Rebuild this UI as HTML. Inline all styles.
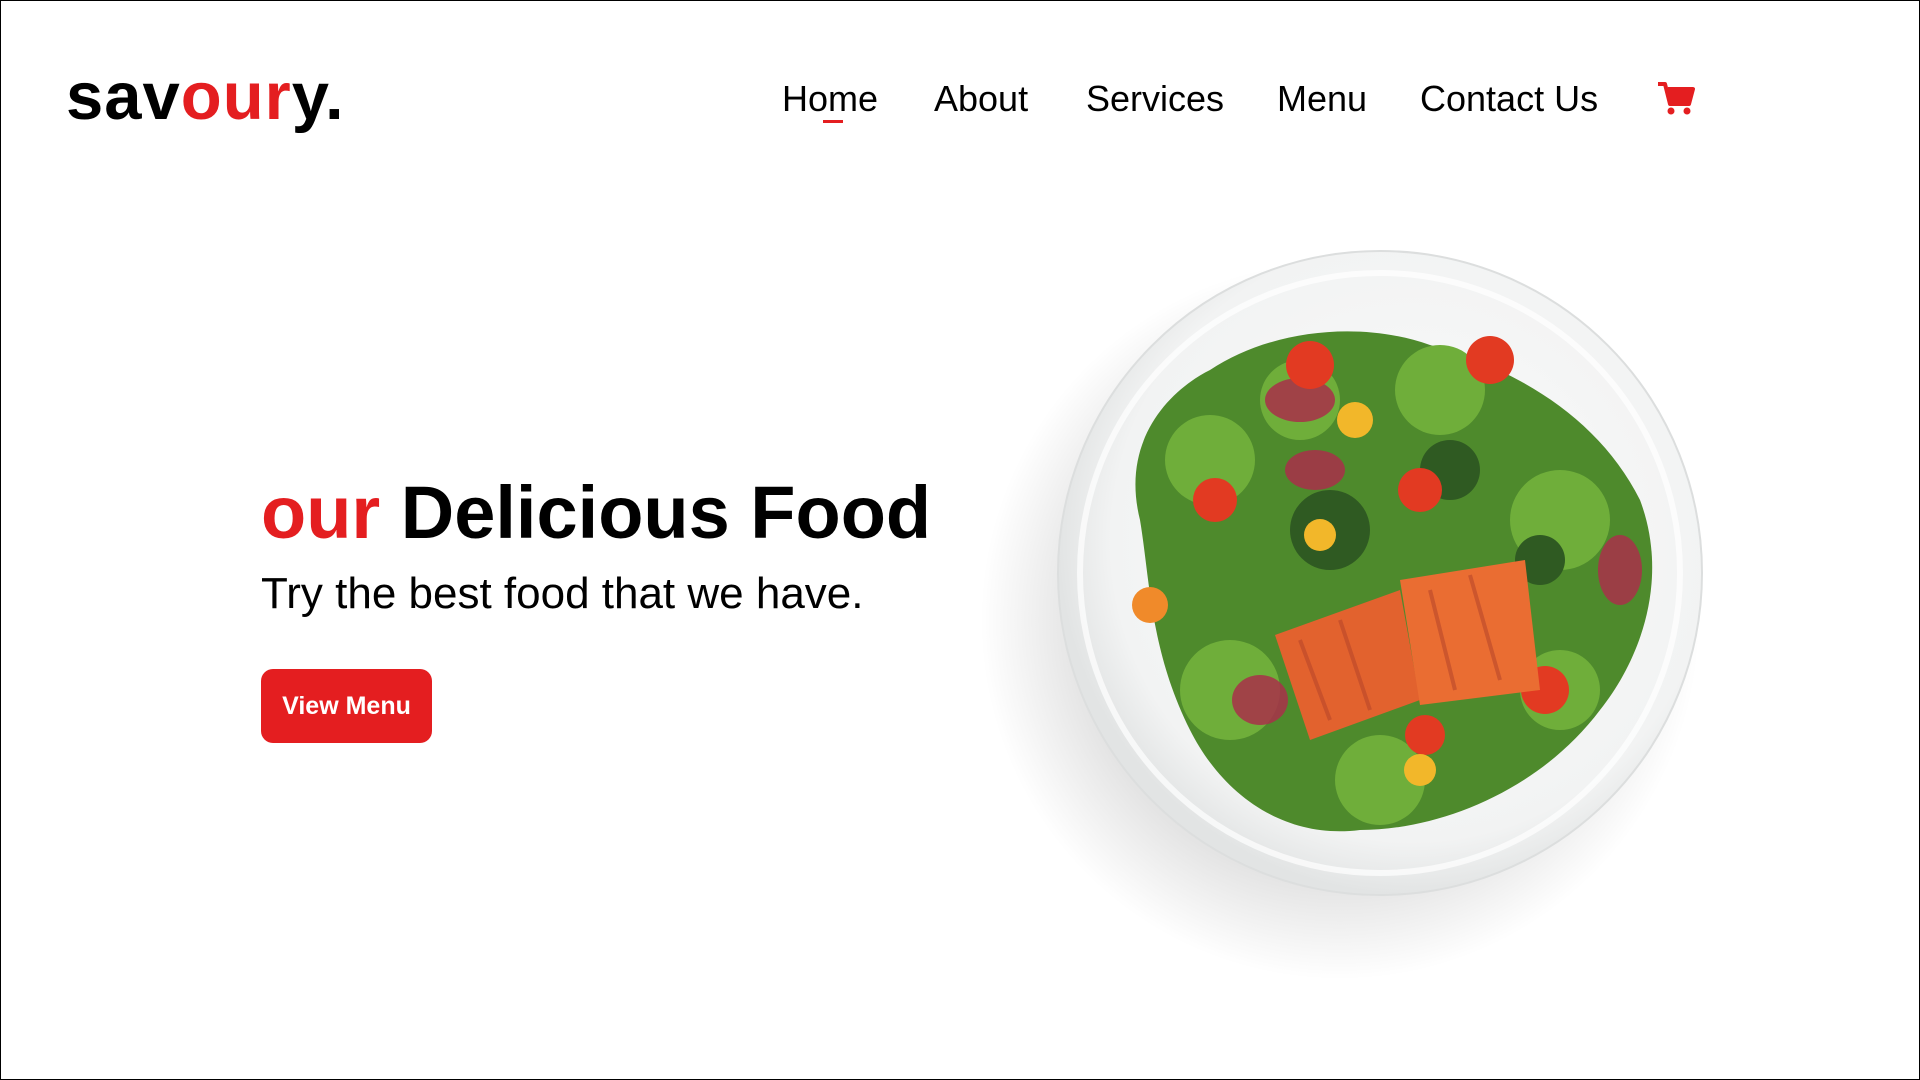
<!DOCTYPE html>
<html><head><meta charset="utf-8"><style>
html,body{margin:0;padding:0}
body{width:1920px;height:1080px;position:relative;overflow:hidden;background:#fff;font-family:"Liberation Sans",sans-serif;color:#000}
.frame{position:absolute;left:0;top:0;width:1918px;height:1078px;border:1px solid #000}
.logo{position:absolute;left:66px;top:58px;font-size:67px;font-weight:bold;letter-spacing:1px}
.logo span{color:#e41e20}
.nav{position:absolute;top:78px;font-size:36px;white-space:nowrap}
.ul{position:absolute;left:823px;top:120px;width:20px;height:3px;background:#e41e20}
h1{position:absolute;left:261px;top:470px;margin:0;font-size:74px;font-weight:bold;white-space:nowrap}
h1 span{color:#e41e20}
.sub{position:absolute;left:261px;top:569px;font-size:44px;white-space:nowrap}
.btn{position:absolute;left:261px;top:669px;width:171px;height:74px;background:#e41e20;border-radius:12px;color:#fff;font-weight:bold;font-size:25px;line-height:74px;text-align:center}
</style></head><body>
<div class="frame"></div>
<div class="logo">sav<span>our</span>y.</div>
<div class="nav" style="left:782px">Home</div>
<div class="ul"></div>
<div class="nav" style="left:934px">About</div>
<div class="nav" style="left:1086px">Services</div>
<div class="nav" style="left:1277px">Menu</div>
<div class="nav" style="left:1420px">Contact Us</div>
<svg style="position:absolute;left:1656px;top:80px" width="40" height="36" viewBox="0 0 40 36">
<path d="M2 4h7l5 20h19l4-15H12" fill="none" stroke="#e41e20" stroke-width="4" stroke-linejoin="round"/>
<path d="M11 9h26l-4 15H14z" fill="#e41e20"/>
<circle cx="15" cy="31" r="3.5" fill="#e41e20"/><circle cx="31" cy="31" r="3.5" fill="#e41e20"/>
</svg>
<h1><span>our</span> Delicious Food</h1>
<div class="sub">Try the best food that we have.</div>
<div class="btn">View Menu</div>
<svg style="position:absolute;left:960px;top:220px" width="800" height="760" viewBox="960 220 800 760">
<defs>
<radialGradient id="sh" cx="0.5" cy="0.5" r="0.5"><stop offset="0.7" stop-color="#000" stop-opacity="0.12"/><stop offset="1" stop-color="#000" stop-opacity="0"/></radialGradient>
<radialGradient id="pl" cx="0.55" cy="0.45" r="0.55"><stop offset="0" stop-color="#fbfbfb"/><stop offset="0.85" stop-color="#f2f3f3"/><stop offset="1" stop-color="#e2e4e4"/></radialGradient>
</defs>
<circle cx="1340" cy="620" r="360" fill="url(#sh)"/>
<circle cx="1380" cy="573" r="322" fill="url(#pl)" stroke="#dcdede" stroke-width="2"/>
<circle cx="1380" cy="573" r="300" fill="none" stroke="#fff" stroke-width="6" opacity="0.7"/>
<path d="M1140 520C1120 440 1170 390 1210 370C1270 330 1360 320 1430 345C1520 370 1600 420 1640 500C1670 580 1640 660 1600 710C1540 790 1440 830 1360 830C1280 840 1220 790 1190 730C1150 650 1150 580 1140 520Z" fill="#4e8a2c"/>
<g fill="#6fae3a"><circle cx="1210" cy="460" r="45"/><circle cx="1300" cy="400" r="40"/><circle cx="1440" cy="390" r="45"/><circle cx="1560" cy="520" r="50"/><circle cx="1230" cy="690" r="50"/><circle cx="1380" cy="780" r="45"/><circle cx="1560" cy="690" r="40"/></g>
<g fill="#2f5a22"><circle cx="1330" cy="530" r="40"/><circle cx="1450" cy="470" r="30"/><circle cx="1540" cy="560" r="25"/></g>
<g fill="#a9304a" opacity="0.85"><ellipse cx="1300" cy="400" rx="35" ry="22"/><ellipse cx="1315" cy="470" rx="30" ry="20"/><ellipse cx="1620" cy="570" rx="22" ry="35"/><ellipse cx="1260" cy="700" rx="28" ry="25"/></g>
<g fill="#e23a22"><circle cx="1310" cy="365" r="24"/><circle cx="1490" cy="360" r="24"/><circle cx="1215" cy="500" r="22"/><circle cx="1420" cy="490" r="22"/><circle cx="1545" cy="690" r="24"/><circle cx="1425" cy="735" r="20"/><circle cx="1150" cy="605" r="18" fill="#f08a2a"/></g>
<g fill="#f2b72a"><circle cx="1355" cy="420" r="18"/><circle cx="1320" cy="535" r="16"/><circle cx="1420" cy="770" r="16"/></g>
<path d="M1275 635L1400 590L1420 700L1310 740Z" fill="#e2622e"/>
<path d="M1400 580L1525 560L1540 690L1420 705Z" fill="#ea6d32"/>
<g stroke="#b9472a" stroke-width="4" opacity="0.6"><path d="M1300 640L1330 720M1340 620L1370 710M1430 590L1455 690M1470 575L1500 680"/></g>
</svg>
</body></html>
